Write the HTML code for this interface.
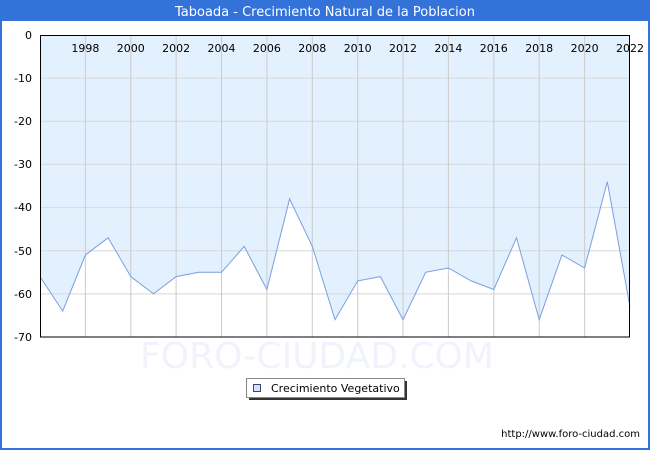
<!DOCTYPE html>
<html><head><style>
body{margin:0;width:650px;height:450px;overflow:hidden;background:#fff;font-family:"DejaVu Sans","Liberation Sans",sans-serif;}
</style></head><body>
<svg width="650" height="450" xmlns="http://www.w3.org/2000/svg" font-family="DejaVu Sans, Liberation Sans, sans-serif">
<rect x="0" y="0" width="650" height="450" fill="#3373d9"/>
<rect x="2" y="21" width="646" height="427" fill="#fff"/>
<text x="325" y="16" font-size="13" fill="#fff" text-anchor="middle">Taboada - Crecimiento Natural de la Poblacion</text>
<rect x="40" y="35" width="590" height="302" fill="#e3f0fe"/>
<polygon fill="#fff" points="40,276.6 62.7,311.1 85.4,255 108.1,237.8 130.8,276.6 153.5,293.8 176.1,276.6 198.8,272.3 221.5,272.3 244.2,246.4 266.9,289.5 289.6,198.9 312.3,246.4 335,319.7 357.7,280.9 380.4,276.6 403,319.7 425.7,272.3 448.4,268 471.1,280.9 493.8,289.5 516.5,237.8 539.2,319.7 561.9,255 584.6,268 607.3,181.7 630,306.8 630,337 40,337"/>
<g stroke="#d8d8d8" stroke-width="1">
<line x1="40" y1="78.1" x2="630" y2="78.1"/><line x1="40" y1="121.3" x2="630" y2="121.3"/><line x1="40" y1="164.4" x2="630" y2="164.4"/><line x1="40" y1="207.6" x2="630" y2="207.6"/><line x1="40" y1="250.7" x2="630" y2="250.7"/><line x1="40" y1="293.9" x2="630" y2="293.9"/>
</g>
<g stroke="#cccccc" stroke-width="1">
<line x1="85.4" y1="35" x2="85.4" y2="337"/><line x1="130.8" y1="35" x2="130.8" y2="337"/><line x1="176.1" y1="35" x2="176.1" y2="337"/><line x1="221.5" y1="35" x2="221.5" y2="337"/><line x1="266.9" y1="35" x2="266.9" y2="337"/><line x1="312.3" y1="35" x2="312.3" y2="337"/><line x1="357.7" y1="35" x2="357.7" y2="337"/><line x1="403" y1="35" x2="403" y2="337"/><line x1="448.4" y1="35" x2="448.4" y2="337"/><line x1="493.8" y1="35" x2="493.8" y2="337"/><line x1="539.2" y1="35" x2="539.2" y2="337"/><line x1="584.6" y1="35" x2="584.6" y2="337"/>
</g>
<polyline fill="none" stroke="#7a9fe0" stroke-width="1" points="40,276.6 62.7,311.1 85.4,255 108.1,237.8 130.8,276.6 153.5,293.8 176.1,276.6 198.8,272.3 221.5,272.3 244.2,246.4 266.9,289.5 289.6,198.9 312.3,246.4 335,319.7 357.7,280.9 380.4,276.6 403,319.7 425.7,272.3 448.4,268 471.1,280.9 493.8,289.5 516.5,237.8 539.2,319.7 561.9,255 584.6,268 607.3,181.7 630,306.8"/>
<rect x="40.5" y="35.5" width="589" height="301.5" fill="none" stroke="#000" stroke-width="1"/>
<text x="317" y="368" font-size="36" fill="#f0f3fc" text-anchor="middle">FORO-CIUDAD.COM</text>
<g font-size="11" fill="#000" text-anchor="end">
<text x="32" y="39">0</text><text x="32" y="82">-10</text><text x="32" y="125">-20</text><text x="32" y="168">-30</text><text x="32" y="211">-40</text><text x="32" y="255">-50</text><text x="32" y="298">-60</text><text x="32" y="341">-70</text>
</g>
<g font-size="11" fill="#000" text-anchor="middle">
<text x="85.4" y="52">1998</text><text x="130.8" y="52">2000</text><text x="176.1" y="52">2002</text><text x="221.5" y="52">2004</text><text x="266.9" y="52">2006</text><text x="312.3" y="52">2008</text><text x="357.7" y="52">2010</text><text x="403" y="52">2012</text><text x="448.4" y="52">2014</text><text x="493.8" y="52">2016</text><text x="539.2" y="52">2018</text><text x="584.6" y="52">2020</text><text x="630" y="52">2022</text>
</g>
<rect x="249" y="381" width="158" height="19" fill="#333"/>
<rect x="246.5" y="378.5" width="158" height="19" fill="#fff" stroke="#888"/>
<rect x="253.5" y="384.5" width="7" height="7" fill="#cfe4fb" stroke="#446"/>
<text x="271" y="392" font-size="11" fill="#000">Crecimiento Vegetativo</text>
<text x="640" y="437" font-size="10" fill="#000" text-anchor="end">http://www.foro-ciudad.com</text>
</svg>
</body></html>
